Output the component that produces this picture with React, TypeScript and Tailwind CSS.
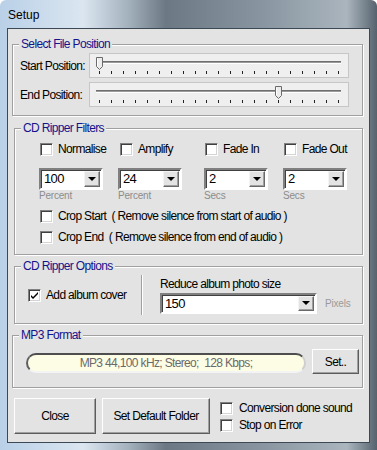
import type { ReactNode } from "react"

const ui = "font-['Liberation_Sans',Arial,sans-serif] text-[12px] tracking-[-0.65px] text-black"

function Group({ title, className, children }: { title: string; className: string; children: ReactNode }) {
  return (
    <div className={`relative border border-[#a0a0a0] shadow-[inset_1px_1px_0_#fff,1px_1px_0_#fff] ${className}`}>
      <span className="absolute -top-[8px] left-[6px] bg-[#e3e3e3] px-[2px] leading-[14px] text-[#13138c]">
        {title}
      </span>
      {children}
    </div>
  )
}

function Check({ checked = false }: { checked?: boolean }) {
  return (
    <span className="flex h-[13px] w-[13px] shrink-0 items-center justify-center border border-b-white border-l-[#808080] border-r-white border-t-[#808080] bg-white shadow-[inset_1px_1px_0_#404040,inset_-1px_-1px_0_#d4d4d4]">
      {checked && (
        <svg width="9" height="9" viewBox="0 0 9 9">
          <path d="M1 4l2 2 5-5v2l-5 5-2-2z" fill="#000" />
        </svg>
      )}
    </span>
  )
}

function CheckLabel({ label, checked, className = "" }: { label: string; checked?: boolean; className?: string }) {
  return (
    <div className={`flex h-[13px] items-center gap-[5px] whitespace-nowrap ${className}`}>
      <Check checked={checked} />
      <span className="leading-[13px]">{label}</span>
    </div>
  )
}

function Arrow() {
  return <span className="h-0 w-0 border-l-[4px] border-r-[4px] border-t-[4px] border-l-transparent border-r-transparent border-t-black" />
}

function Combo({ value, className }: { value: string; className: string }) {
  return (
    <div className={`flex border-2 border-b-white border-l-[#808080] border-r-white border-t-[#808080] bg-white p-[1px] shadow-[inset_1px_1px_0_#404040] ${className}`}>
      <span className="flex-1 pl-[2px] text-[13px] leading-[16px]">{value}</span>
      <span className="flex w-[16px] items-center justify-center border border-b-[#696969] border-l-[#f4f4f4] border-r-[#696969] border-t-[#f4f4f4] bg-[#e3e3e3] shadow-[inset_-1px_-1px_0_#a0a0a0]">
        <Arrow />
      </span>
    </div>
  )
}

function Slider({ thumb }: { thumb: string }) {
  return (
    <div className="relative h-[25px] w-[260px] border border-[#c6c6c6] bg-[#efefef]">
      <div className="ml-[6px] mr-[7px] mt-[7px] h-[3px] border-b border-t border-b-white border-t-[#6f6f6f] bg-[#9a9a9a]" />
      <div className="ml-[9px] mt-[7px] flex h-[3px] w-[240px] justify-between">
        {Array.from({ length: 21 }).map((_, i) => (
          <span key={i} className="h-[3px] w-[1px] bg-[#222]" />
        ))}
      </div>
      <svg className={`absolute top-[3px] ${thumb}`} width="7" height="13" viewBox="0 0 7 13">
        <path d="M0.5 0.5h6v9l-3 3-3-3z" fill="#ececec" stroke="#6a6a6a" />
        <path d="M1.5 1.5v7.6" stroke="#fff" />
      </svg>
    </div>
  )
}

function Button({ children, className }: { children: ReactNode; className: string }) {
  return (
    <div className={`flex items-center justify-center border border-b-[#5c5c5c] border-l-white border-r-[#5c5c5c] border-t-white bg-[#e3e3e3] shadow-[inset_-1px_-1px_0_#a0a0a0] ${className}`}>
      {children}
    </div>
  )
}

export default function App() {
  return (
    <div className={`flex h-[450px] w-[377px] flex-col overflow-hidden rounded-t-[6px] bg-[linear-gradient(90deg,#b9d0e7_0%,#dbe6f0_22%,#a4b2be_34%,#6c7884_44%,#8996a1_70%,#aab5be_92%,#56636e_100%)] ${ui}`}>
      {/* title bar */}
      <div className="flex h-[28px] shrink-0 items-center pl-[8px] pt-[2px]">
        <span className="font-['Liberation_Sans',Arial,sans-serif] text-[12px] tracking-normal">Setup</span>
      </div>

      {/* client */}
      <div className="mx-[7px] flex h-[415px] flex-col border border-[#3c4853] bg-[#e3e3e3]">
        <Group title="Select File Position" className="ml-[4px] mt-[15px] h-[72px] w-[351px] shrink-0">
          <div className="flex flex-col gap-[4px] pl-[7px] pt-[8px]">
            <div className="flex h-[25px] items-center">
              <span className="w-[69px]">Start Position:</span>
              <Slider thumb="left-[6px]" />
            </div>
            <div className="flex h-[25px] items-center">
              <span className="w-[69px]">End Position:</span>
              <Slider thumb="left-[185px]" />
            </div>
          </div>
        </Group>

        <Group title="CD Ripper Filters" className="ml-[6px] mt-[12px] h-[127px] w-[349px] shrink-0">
          <div className="flex flex-col pl-[24px] pt-[14px]">
            <div className="grid grid-cols-[79px_86px_79px_64px]">
              <CheckLabel label="Normalise" className="ml-[1px]" />
              <CheckLabel label="Amplify" className="ml-[2px]" />
              <CheckLabel label="Fade In" className="ml-[1px]" />
              <CheckLabel label="Fade Out" className="ml-[1px]" />
            </div>
            <div className="mt-[12px] grid grid-cols-[79px_86px_79px_64px]">
              <Combo value="100" className="h-[22px] w-[64px]" />
              <Combo value="24" className="h-[22px] w-[64px]" />
              <Combo value="2" className="h-[22px] w-[64px]" />
              <Combo value="2" className="h-[22px] w-[64px]" />
            </div>
            <div className="grid grid-cols-[79px_86px_79px_64px] text-[10px] leading-[12px] tracking-[-0.2px] text-[#8c8c8c]">
              <span>Percent</span>
              <span>Percent</span>
              <span>Secs</span>
              <span>Secs</span>
            </div>
            <CheckLabel label="Crop Start  ( Remove silence from start of audio )" className="ml-[1px] mt-[8px] whitespace-pre" />
            <CheckLabel label="Crop End  ( Remove silence from end of audio )" className="ml-[1px] mt-[8px] whitespace-pre" />
          </div>
        </Group>

        <Group title="CD Ripper Options" className="ml-[6px] mt-[11px] h-[58px] w-[349px] shrink-0">
          <div className="flex h-full items-center">
            <div className="w-[126px] pl-[13px]">
              <CheckLabel label="Add album cover" checked />
            </div>
            <span className="h-[40px] w-[2px] border-l border-r border-l-[#a0a0a0] border-r-white" />
            <div className="ml-[17px] flex flex-col">
              <span className="leading-[14px]">Reduce album photo size</span>
              <div className="mt-[2px] flex items-center">
                <Combo value="150" className="h-[21px] w-[157px]" />
                <span className="ml-[8px] text-[10px] tracking-[-0.2px] text-[#9a9a9a]">Pixels</span>
              </div>
            </div>
          </div>
        </Group>

        <Group title="MP3 Format" className="ml-[4px] mt-[11px] h-[53px] w-[351px] shrink-0">
          <div className="flex items-start pl-[13px] pt-[13px]">
            <div className="mt-[4px] flex h-[20px] w-[280px] items-center justify-center rounded-[10px] border-2 border-b-[#f4f4f4] border-l-[#5e5e5e] border-r-[#cfcfcf] border-t-[#4e4e4e] bg-[#fdfde6] text-[#6a6a6a] whitespace-pre">
              MP3 44,100 kHz; Stereo;  128 Kbps;
            </div>
            <Button className="ml-[6px] h-[25px] w-[47px]">Set..</Button>
          </div>
        </Group>

        <div className="ml-[6px] mt-[10px] flex h-[36px] shrink-0">
          <Button className="h-[36px] w-[82px]">Close</Button>
          <Button className="ml-[6px] h-[36px] w-[108px]">Set Default Folder</Button>
          <div className="ml-[10px] flex flex-col gap-[4px] pt-[4px]">
            <CheckLabel label="Conversion done sound" className="gap-[6px]" />
            <CheckLabel label="Stop on Error" className="gap-[6px]" />
          </div>
        </div>
      </div>
    </div>
  )
}
